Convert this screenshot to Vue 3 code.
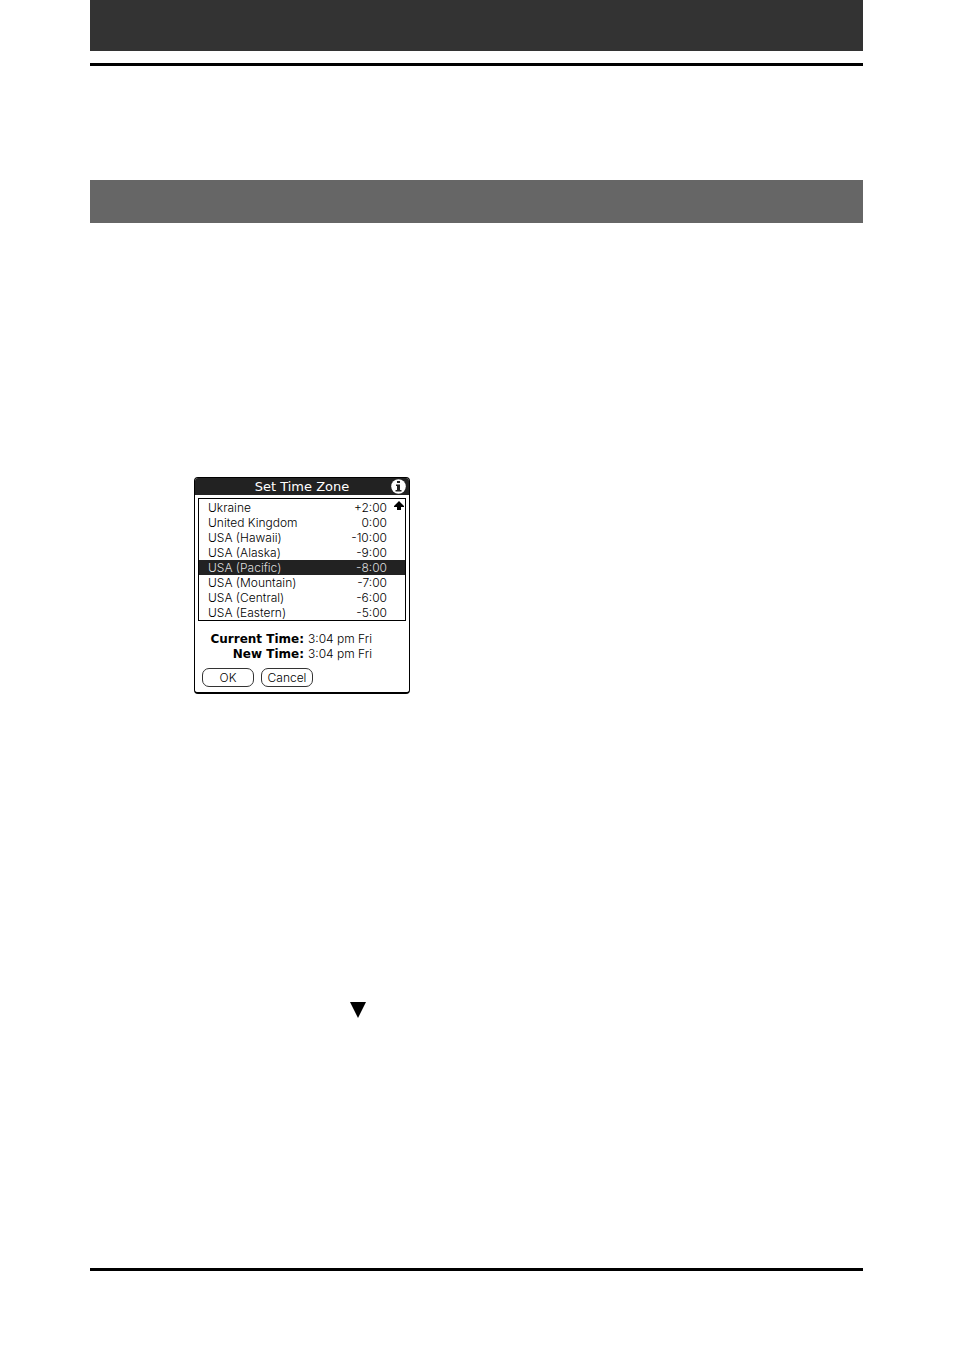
<template>
    <div class="page">
        <header class="page-header"></header>
        <section class="section-title"></section>
        <main class="content">
            <form class="dialog" @submit.prevent>
                <div class="dialog-header">
                    <h1>Set Time Zone</h1>
                    <button type="button" class="icon-button" aria-label="Info">
                        <svg width="15" height="15" viewBox="0 0 15 15">
                            <circle cx="7.5" cy="7.5" r="7.3" fill="#fff" />
                            <path d="M6 2h3v2H6zM5 5.5h4V11h1.5v1.5h-6V11H6V7H5z" fill="#222" />
                        </svg>
                    </button>
                </div>

                <div class="zone-box">
                    <ul class="zone-list" role="listbox" aria-label="Time zone">
                        <li
                            v-for="zone in zones"
                            :key="zone.name"
                            class="zone-item"
                            :class="{ selected: zone.name === selected }"
                            role="option"
                            :aria-selected="zone.name === selected"
                            @click="selected = zone.name"
                        >
                            <span>{{ zone.name }}</span>
                            <span>{{ zone.offset }}</span>
                        </li>
                    </ul>
                    <button type="button" class="scroll-up" aria-label="Scroll up">
                        <svg width="10" height="10" viewBox="0 0 10 10">
                            <path d="M5 0l5 5v1H7v3H3V6H0V5z" fill="#000" />
                        </svg>
                    </button>
                </div>

                <dl class="times">
                    <dt>Current Time:</dt>
                    <dd>3:04 pm Fri</dd>
                    <dt>New Time:</dt>
                    <dd>3:04 pm Fri</dd>
                </dl>

                <div class="actions">
                    <button type="submit" class="action">OK</button>
                    <button type="button" class="action">Cancel</button>
                </div>
            </form>

            <svg class="marker" width="16" height="16" viewBox="0 0 16 16">
                <path d="M0 0h16L8 16z" fill="#000" />
            </svg>
        </main>
        <footer class="page-footer"></footer>
    </div>
</template>

<script setup>
import { ref } from 'vue';

const selected = ref('USA (Pacific)');

const zones = [
    { name: 'Ukraine', offset: '+2:00' },
    { name: 'United Kingdom', offset: '0:00' },
    { name: 'USA (Hawaii)', offset: '-10:00' },
    { name: 'USA (Alaska)', offset: '-9:00' },
    { name: 'USA (Pacific)', offset: '-8:00' },
    { name: 'USA (Mountain)', offset: '-7:00' },
    { name: 'USA (Central)', offset: '-6:00' },
    { name: 'USA (Eastern)', offset: '-5:00' },
];
</script>

<style>
body {
    margin: 0;
    background-color: #fff;
}
</style>

<style scoped>
.page {
    padding: 0 91px 80px 90px;
    font-family: Inter, "Liberation Sans", sans-serif;
    font-size: 12px;
    font-weight: 300;
    line-height: 15px;
    color: #000;
}

.page-header {
    height: 12px;
    border-top: 51px solid #333;
    border-bottom: 3px solid #000;
}

.section-title {
    height: 43px;
    margin-top: 114px;
    background-color: #666;
}

.content {
    padding: 254px 104px 250px;
}

.dialog {
    box-sizing: border-box;
    width: 216px;
    padding-bottom: 5px;
    border: 1px solid #000;
    border-bottom-width: 2px;
    border-radius: 4px;
}

.dialog-header {
    display: grid;
    grid-template-columns: 1fr auto;
    align-items: center;
    height: 17px;
    padding: 0 3px;
    border-radius: 3px 3px 0 0;
    background-color: #222;
    color: #fff;
}

h1 {
    margin: 0;
    padding-left: 15px;
    font-family: "DejaVu Sans", sans-serif;
    font-size: 13px;
    font-weight: 400;
    line-height: 17px;
    text-align: center;
}

.icon-button,
.scroll-up {
    display: block;
    padding: 0;
    border: 0;
    background: none;
}

svg {
    display: block;
}

.zone-box {
    position: relative;
    margin: 3px 3px 0;
    border: 1px solid #000;
}

.zone-list {
    margin: 0;
    padding: 1px 0 0;
    list-style-type: none;
}

.zone-item {
    display: flex;
    justify-content: space-between;
    padding: 0 18px 0 9px;
}

.zone-item.selected {
    background-color: #222;
    color: #ddd;
}

.scroll-up {
    position: absolute;
    top: 2px;
    right: 1px;
}

.times {
    display: grid;
    grid-template-columns: 109px auto;
    align-items: baseline;
    column-gap: 4px;
    margin: 10px 0 0;
}

dt {
    font-family: "DejaVu Sans", sans-serif;
    font-size: 12px;
    font-weight: 700;
    line-height: 14px;
    text-align: right;
}

dd {
    margin: 0;
}

.actions {
    display: flex;
    gap: 7px;
    margin: 7px 7px 0;
}

.action {
    width: 52px;
    height: 19px;
    padding: 0;
    border: 1px solid #333;
    border-radius: 7px;
    background-color: #fff;
    color: #000;
    font: inherit;
}

.marker {
    margin: 308px 0 0 156px;
}

.page-footer {
    height: 3px;
    background-color: #000;
}
</style>
